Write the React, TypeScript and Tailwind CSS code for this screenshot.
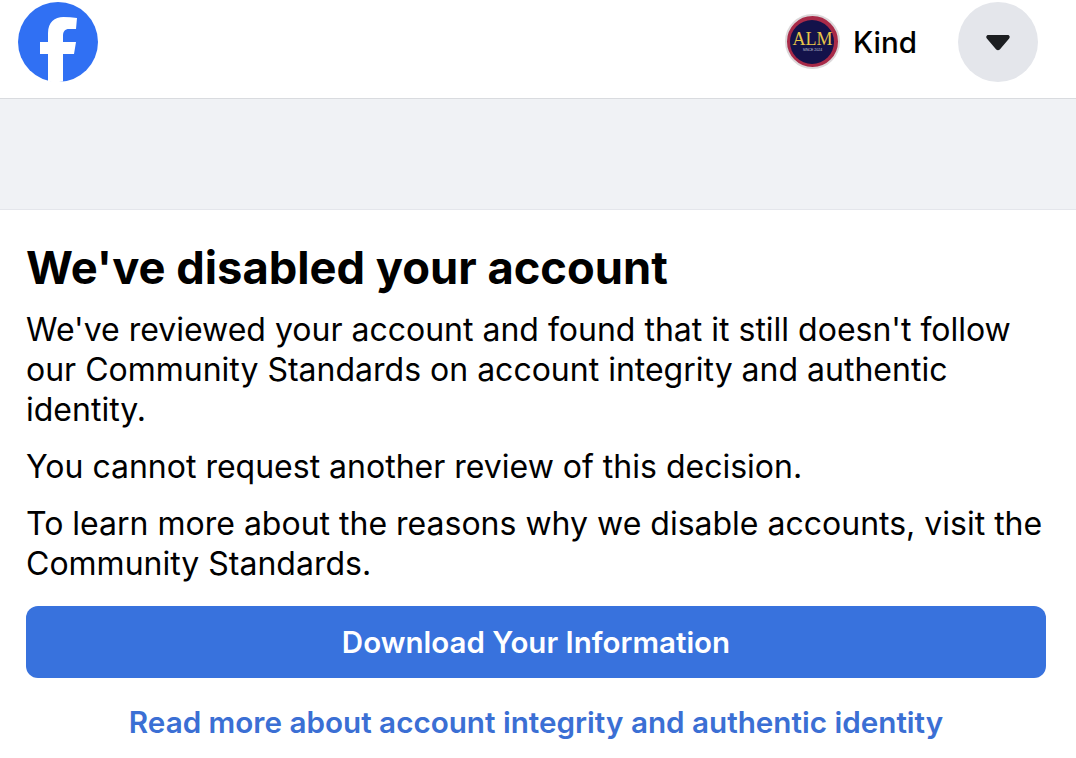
const font = "font-['Inter',sans-serif]";

function FacebookLogo() {
  return (
    <svg viewBox="0 0 80 80" className="h-20 w-20">
      <circle cx="40" cy="40" r="40" fill="#3070f3" />
      <path
        d="M30 79.400V52H22V40h8v-9C30 20.500 36.500 15 45.500 15c4.500 0 9 .5 13.500 1l-1 11h-7c-4 0-6 2.400-6 6.500V40h13l-2 12H45v27.400c-2.500.4-5 .6-7.500.6s-5-.2-7.500-.6z"
        fill="#ffffff"
      />
    </svg>
  );
}

function Avatar() {
  return (
    <div className="flex h-[55px] w-[55px] items-center justify-center rounded-full border-2 border-[#dcd8da] bg-[#a82a48]">
      <div className="flex h-[44px] w-[44px] flex-col items-center justify-center rounded-full bg-[#13124a]">
        <span className="font-['Liberation_Serif',serif] text-[18px] leading-[17px] text-[#e8c547]">ALM</span>
        <span className="font-['Liberation_Sans',sans-serif] text-[3.5px] leading-[5px] text-[#c9c9d8]">SINCE 2024</span>
      </div>
    </div>
  );
}

export default function App() {
  return (
    <div className={`${font} h-[758px] w-[1076px] overflow-hidden bg-white text-black`}>
      {/* Header */}
      <header className="flex h-[99px] items-start justify-between border-b border-[#d9dbdf] pl-[18px] pr-[38px] pt-[2px] shadow-[0_1px_3px_rgba(0,0,0,0.1)]">
        <FacebookLogo />
        <div className="flex items-start">
          <div className="mt-[12px]">
            <Avatar />
          </div>
          <span className="ml-[13px] mt-[21px] text-[29.5px] font-medium leading-[38px]">Kind</span>
          <button className="ml-[41px] flex h-20 w-20 items-center justify-center rounded-full bg-[#e4e6eb]">
            <svg viewBox="0 0 24 16" className="h-[17px] w-[26px]">
              <path d="M3 1h18c1.800 0 2.700 1.800 1.500 3.200l-8.800 10.300c-1 1-2.400 1-3.400 0L1.500 4.200C.3 2.800 1.200 1 3 1z" fill="#1c1e21" />
            </svg>
          </button>
        </div>
      </header>

      <div className="h-[111px] border-b border-[#e4e6eb] bg-[#f0f2f5]" />

      {/* Message */}
      <main className="pl-[26px] pr-[30px] pt-[28px]">
        <h1 className="text-[45.3px] font-bold leading-[60px]">We've disabled your account</h1>
        <p className="mt-[12px] text-[32px] leading-[40px]">
          We've reviewed your account and found that it still doesn't follow our Community Standards on account integrity and authentic identity.
        </p>
        <p className="mt-[17px] text-[32px] leading-[40px]">You cannot request another review of this decision.</p>
        <p className="mt-[17px] text-[32px] leading-[40px]">
          To learn more about the reasons why we disable accounts, visit the Community Standards.
        </p>
        <button className="mt-[22px] h-[72px] w-full rounded-[12px] bg-[#3872dd] text-[29.5px] font-semibold text-white">
          Download Your Information
        </button>
        <div className="mt-[24px] text-center">
          <a className="text-[29.65px] font-semibold leading-[40px] text-[#3b6fd4]">
            Read more about account integrity and authentic identity
          </a>
        </div>
      </main>
    </div>
  );
}
